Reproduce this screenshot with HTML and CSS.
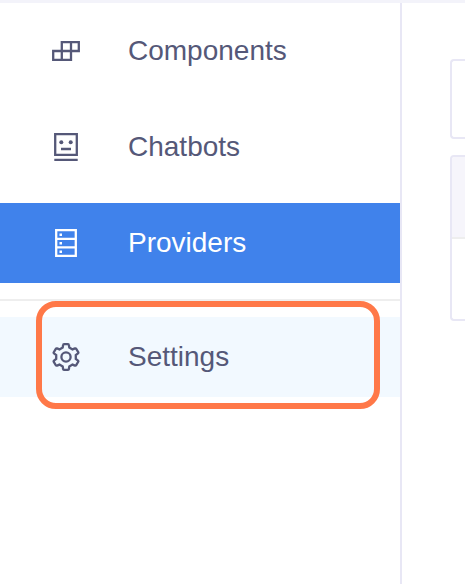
FILE: index.html
```html
<!DOCTYPE html>
<html lang="en">
<head>
<meta charset="utf-8">
<meta name="viewport" content="width=device-width, initial-scale=1">
<title>Settings</title>
<link rel="stylesheet" href="styles.css">
</head>
<body>
<div class="app">
  <nav class="sidebar">
    <a class="item" href="#components">
      <svg class="icon" viewBox="0 0 28 28"><path d="M9.800 5.200h17v8.800h-17zM1.200 14h17.800v8.800H1.200zM9.800 14v8.800M19 5.200V14"/></svg>
      <span>Components</span>
    </a>
    <a class="item" href="#chatbots">
      <svg class="icon" viewBox="0 0 28 28"><path d="M3.200 1.200h21.600v20.600H3.200zM2.300 27h23.400M9 16h10"/><circle class="solid" cx="9.300" cy="9.200" r="2"/><circle class="solid" cx="18.700" cy="9.200" r="2"/></svg>
      <span>Chatbots</span>
    </a>
    <a class="item active" href="#providers">
      <svg class="icon" viewBox="0 0 28 28"><path d="M4.200 1.200h19.600v25.600H4.200zM4 9.800h20M4 18.300h20"/><path class="solid" d="M7.500 4.500h2.500v2.500H7.500zM7.500 13h2.500v2.500H7.500zM7.500 21.500h2.500v2.500H7.500z"/></svg>
      <span>Providers</span>
    </a>
    <hr class="divider">
    <div class="marked">
      <a class="item hovered" href="#settings">
        <svg class="icon" viewBox="0 0 28 28"><path d="M12 1.200h4q.8 0 .9.800l.4 2.600 3.200 1.800 2.500-1q.8-.3 1.200.4l2 3.400q.4.700-.2 1.200L23.800 12v4l2.200 1.600q.6.500.2 1.200l-2 3.400q-.4.700-1.200.4l-2.500-1-3.200 1.800-.4 2.600q-.1.800-.9.800h-4q-.8 0-.9-.8l-.4-2.600-3.200-1.800-2.500 1q-.8.300-1.200-.4l-2-3.400q-.4-.7.200-1.200L4.200 16v-4L2 10.400q-.6-.5-.2-1.200l2-3.400q.4-.7 1.200-.4l2.500 1 3.200-1.800.4-2.600q.1-.8.900-.8z"/><circle cx="14" cy="14" r="4.600"/></svg>
        <span>Settings</span>
      </a>
      <div class="highlight"></div>
    </div>
  </nav>
  <main class="content">
    <section class="card"></section>
    <section class="card">
      <div class="card-head"></div>
      <div class="card-body"></div>
    </section>
  </main>
</div>
</body>
</html>
```
FILE: styles.css
```css
* {
  box-sizing: border-box;
}

body {
  margin: 0;
  background: #fff;
  color: #555878;
  font: 28px/32px "Liberation Sans", Arial, sans-serif;
}

.app {
  display: flex;
  min-height: 100vh;
  border-top: 3px solid #f3f3fa;
  overflow: hidden;
}

.sidebar {
  flex: 0 0 402px;
  display: flex;
  flex-direction: column;
  gap: 16px;
  padding-top: 8px;
  border-right: 2px solid #e8e7f5;
}

.item {
  display: flex;
  align-items: center;
  gap: 48px;
  height: 80px;
  padding-left: 52px;
  color: inherit;
  text-decoration: none;
}

.active {
  background: #4082eb;
  color: #fff;
}

.hovered {
  background: #f2f9ff;
}

.icon {
  width: 28px;
  height: 28px;
  fill: none;
  stroke: currentColor;
  stroke-width: 2.3;
}

.icon .solid {
  fill: currentColor;
  stroke: none;
}

.divider {
  width: 100%;
  height: 2px;
  margin: 0;
  border: 0;
  background: #eee;
}

.marked {
  position: relative;
}

/* Frame drawn over the settings row */
.highlight {
  position: absolute;
  inset: -16px 20px -12px 36px;
  border: 6px solid #ff7848;
  border-radius: 20px;
  pointer-events: none;
}

.content {
  flex: 1;
  display: flex;
  flex-direction: column;
  gap: 16px;
  padding: 56px 0 0 48px;
}

.card {
  min-height: 80px;
  border: 2px solid #e8e7f5;
  border-right: 0;
  border-radius: 4px 0 0 4px;
  overflow: hidden;
}

.card-head {
  height: 82px;
  background: #f6f5fb;
  border-bottom: 2px solid #eee;
}

.card-body {
  height: 80px;
}
```
